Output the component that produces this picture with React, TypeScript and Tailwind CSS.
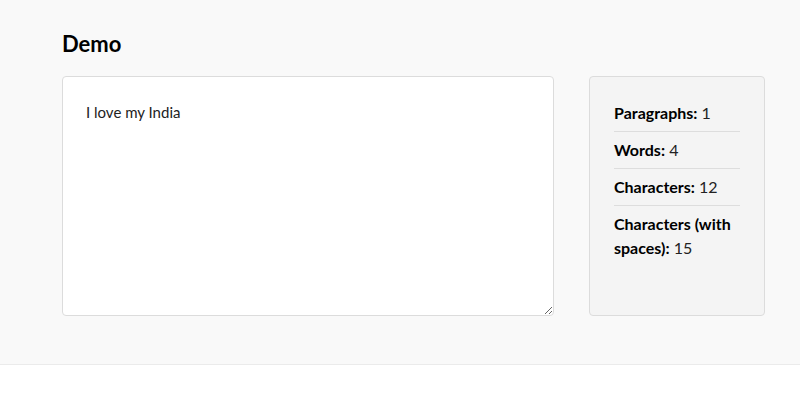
import React, { useState } from 'react'

function countStats(text: string) {
  const paragraphs = text.split(/\n+/).filter((p) => p.trim().length > 0).length
  const words = text.trim() ? text.trim().split(/\s+/).length : 0
  const chars = text.replace(/\s/g, '').length
  return { paragraphs, words, chars, charsWithSpaces: text.length }
}

export default function App() {
  const [text, setText] = useState('I love my India')
  const stats = countStats(text)

  return (
    <div className="min-h-screen bg-white font-['Lato','Liberation_Sans',sans-serif] text-[#111]">
      <div className="bg-[#f9f9f9] border-b border-[#ebebeb] pl-[62px] pr-[35px] pt-[30px] pb-[48px]">
        <h1 className="text-[22px] leading-[28px] font-bold text-black mb-[18px]">Demo</h1>
        <div className="flex gap-[35px] h-[240px]">
          {/* Text input */}
          <textarea
            value={text}
            onChange={(e) => setText(e.target.value)}
            className="flex-1 bg-white border border-[#dcdcdc] rounded-[4px] p-[23px] text-[15px] leading-[24px] text-[#222] outline-none resize-y"
          />

          {/* Stats */}
          <div className="w-[176px] bg-[#f4f4f4] border border-[#dcdcdc] rounded-[4px] px-[24px] py-[18px] text-[16px] leading-[24px] text-[#222]">
            <div className="py-[6px] border-b border-[#dddddd]">
              <b className="text-black">Paragraphs:</b> {stats.paragraphs}
            </div>
            <div className="py-[6px] border-b border-[#dddddd]">
              <b className="text-black">Words:</b> {stats.words}
            </div>
            <div className="py-[6px] border-b border-[#dddddd]">
              <b className="text-black">Characters:</b> {stats.chars}
            </div>
            <div className="py-[6px]">
              <b className="text-black">Characters (with spaces):</b> {stats.charsWithSpaces}
            </div>
          </div>
        </div>
      </div>
    </div>
  )
}
